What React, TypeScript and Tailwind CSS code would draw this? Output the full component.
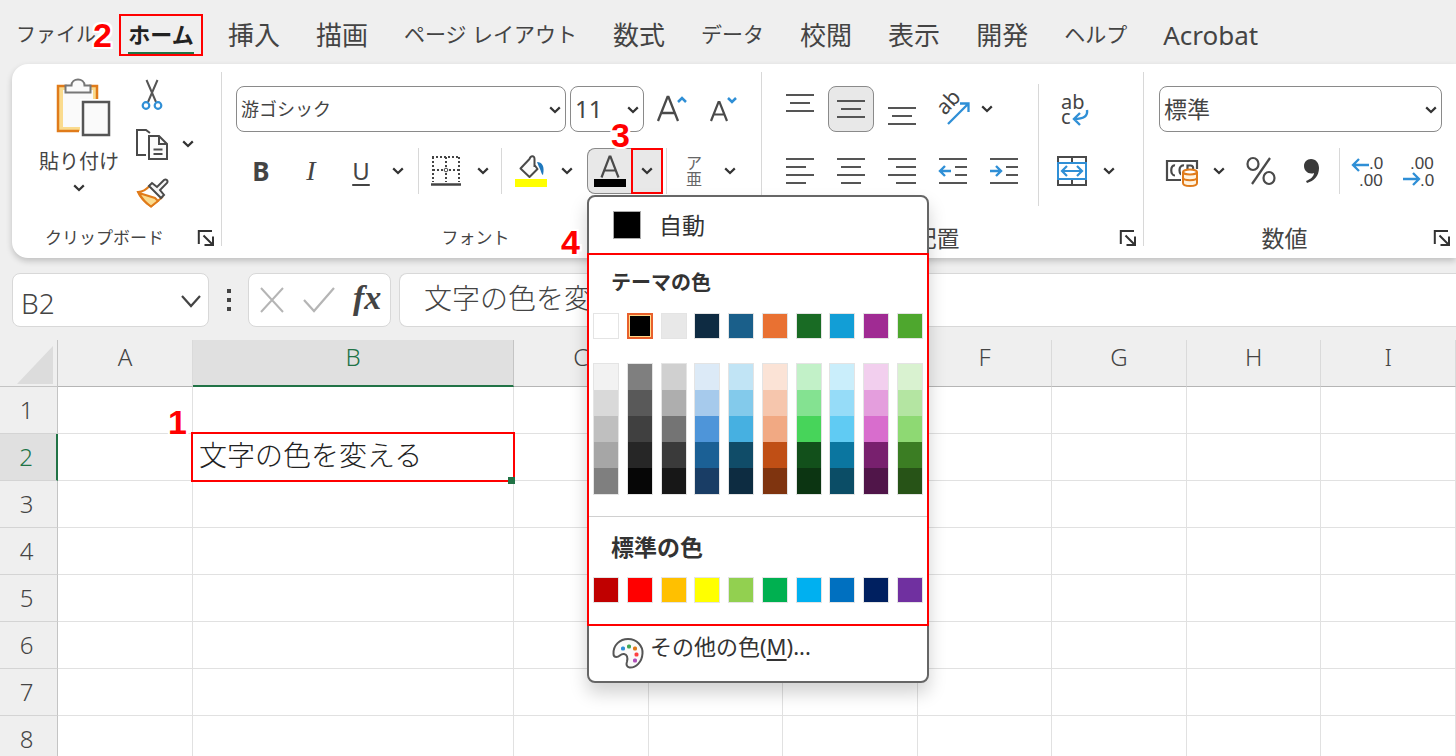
import type { ReactNode } from "react";

const tabs = ["挿入", "描画", "ページ レイアウト", "数式", "データ", "校閲", "表示", "開発", "ヘルプ", "Acrobat"];
const kanaTabs = ["ページ レイアウト", "データ", "ヘルプ"];

const themeColors = [
  { base: "#ffffff", shades: ["#f2f2f2", "#d9d9d9", "#bfbfbf", "#a6a6a6", "#7f7f7f"] },
  { base: "#000000", shades: ["#7f7f7f", "#595959", "#404040", "#262626", "#060606"] },
  { base: "#e8e8e8", shades: ["#d0d0d0", "#aeaeae", "#747474", "#3a3a3a", "#171717"] },
  { base: "#0e2b42", shades: ["#dceaf7", "#a6caec", "#4e95d9", "#1b6095", "#193d65"] },
  { base: "#1a5f8a", shades: ["#c1e4f5", "#83caeb", "#46b0e1", "#104c68", "#0d2c41"] },
  { base: "#e97132", shades: ["#fbe3d6", "#f6c6ad", "#f1a983", "#c04f15", "#7f340f"] },
  { base: "#196b24", shades: ["#c2f1c8", "#84e291", "#47d45a", "#12501b", "#0c3512"] },
  { base: "#129ed6", shades: ["#caeefb", "#96dcf8", "#60cbf3", "#0b76a0", "#0b4d66"] },
  { base: "#a02b93", shades: ["#f2cfee", "#e49edd", "#d86dcd", "#78206e", "#501549"] },
  { base: "#4ea72e", shades: ["#d9f2d0", "#b4e5a2", "#8ed973", "#3b7d23", "#275317"] },
];

const standardColors = [
  "#c00000", "#ff0000", "#ffc000", "#ffff00", "#92d050",
  "#00b050", "#00b0f0", "#0070c0", "#002060", "#7030a0",
];

const columns = ["A", "B", "C", "D", "E", "F", "G", "H", "I"];
const rows = [1, 2, 3, 4, 5, 6, 7, 8];

const Chevron = () => (
  <svg width="12" height="8" viewBox="0 0 12 8" fill="none" stroke="#333" strokeWidth="2.2">
    <path d="M1.2 1.4 6 6l4.8-4.6" />
  </svg>
);

const Launcher = () => (
  <button type="button" aria-label="オプション" className="h-[18px] w-[18px]">
    <svg width="18" height="18" viewBox="0 0 18 18" fill="none" stroke="#333" strokeWidth="2">
      <path d="M1.8 15V2H15" />
      <path d="m6.5 6.5 8.5 8.5M16 7.5V16H7.5" />
    </svg>
  </button>
);

const Callout = ({ n, className }: { n: number; className: string }) => (
  <span
    className={`absolute z-40 font-['Liberation_Sans',sans-serif] text-[34px] leading-[34px] font-bold text-[#ff0000] pointer-events-none [text-shadow:2px_0_#fff,-2px_0_#fff,0_2px_#fff,0_-2px_#fff,2px_2px_#fff,-2px_-2px_#fff,2px_-2px_#fff,-2px_2px_#fff] ${className}`}
  >
    {n}
  </span>
);

const IconButton = ({ label, className, children }: { label: string; className: string; children: ReactNode }) => (
  <button type="button" aria-label={label} className={`flex h-[46px] shrink-0 items-center justify-center ${className}`}>
    {children}
  </button>
);

const Combo = ({ label, value, className }: { label: string; value: string; className: string }) => (
  <div className={`relative h-[46px] ${className}`}>
    <select
      aria-label={label}
      className="h-full w-full appearance-none rounded-lg border border-[#8a8a8a] bg-white pl-1 text-[#444]"
    >
      <option>{value}</option>
    </select>
    <span className="pointer-events-none absolute right-[5px] top-[20px]">
      <Chevron />
    </span>
  </div>
);

// Horizontal bars, each given as [x1, x2, y]
const Lines = ({ bars, children }: { bars: number[][]; children?: ReactNode }) => (
  <svg width="30" height="32" viewBox="0 0 30 32" fill="none" stroke="#555" strokeWidth="2">
    {bars.map(([a, b, y]) => (
      <path key={y} d={`M${a} ${y}H${b}`} />
    ))}
    {children}
  </svg>
);

const GroupLabel = ({ text, className, launcher = true }: { text: string; className: string; launcher?: boolean }) => (
  <div className="mt-auto flex h-10 items-center">
    <span className={`flex-1 text-center text-[#444] ${className}`}>{text}</span>
    {launcher && <Launcher />}
  </div>
);

const GroupDivider = () => <span className="mt-2 mb-3 w-px shrink-0 bg-[#d8d8d8]" />;

const Clipboard = () => (
  <section className="flex w-[209px] shrink-0 flex-col pr-1.5">
    <div className="flex pt-2">
      <button type="button" className="ml-[22px] mt-0.5 flex w-[90px] flex-col items-center text-xl leading-7 text-[#444]">
        <svg className="ml-2" width="56" height="64" viewBox="0 0 56 64" fill="none">
          <path d="M3 12h40v45H3z" fill="#fadb8e" />
          <path d="M8 16h30v37H8z" fill="#fafafa" />
          <path d="M24 57H3V12h9M34 12h8v15" stroke="#e07b1a" strokeWidth="2.5" />
          <path d="M10.5 18.5v-7h6c0-8 13-8 13 0h6v7z" fill="#fafafa" stroke="#777" strokeWidth="2" />
          <path d="M25 25h32v38H25z" fill="#fff" />
          <path d="M28 28h26v33H28z" fill="#fafafa" stroke="#555" strokeWidth="2.5" />
        </svg>
        <span className="mt-2.5 whitespace-nowrap">貼り付け</span>
        <span className="mt-2 block leading-3"><Chevron /></span>
      </button>
      <div className="ml-2.5 flex flex-col gap-[3px]">
        <IconButton label="切り取り" className="w-9">
          <svg width="24" height="34" viewBox="0 0 24 34" fill="none">
            <path d="M6.5 2 16 24M17.5 2 8 24" stroke="#555" strokeWidth="2" />
            <circle cx="6" cy="27.5" r="3.3" stroke="#2f8fd6" strokeWidth="2.2" />
            <circle cx="18" cy="27.5" r="3.3" stroke="#2f8fd6" strokeWidth="2.2" />
          </svg>
        </IconButton>
        <div className="flex">
          <IconButton label="コピー" className="w-9">
            <svg width="34" height="34" viewBox="0 0 34 34" fill="none" stroke="#4a4a4a" strokeWidth="2">
              <path d="M11 28H2V3h9l4 3" />
              <path d="M14 9h10l8 8v15H14z" fill="#fafafa" />
              <path d="M24 9v8h8M18.5 22.5h9M18.5 27h9" />
            </svg>
          </IconButton>
          <IconButton label="コピーのオプション" className="w-9"><Chevron /></IconButton>
        </div>
        <IconButton label="書式のコピー" className="w-9">
          <svg width="34" height="32" viewBox="0 0 34 32" fill="none" strokeWidth="2">
            <path d="M15 8.500 27 20.500l-11 9C11 26 5.500 21 3 15c4 0 8-2 12-6.500z" fill="#fff" stroke="#e07b1a" />
            <path d="m4 16 16 5 3 3-7 5.500C11 26 7 22 4 16z" fill="#fadb8e" stroke="#e07b1a" />
            <path d="m14 9 3-3 5 4 7-7c2-1.500 4.500.500 3 3l-7 7 4 5-3 3z" fill="#f6f6f6" stroke="#4a4a4a" />
          </svg>
        </IconButton>
      </div>
    </div>
    <GroupLabel text="クリップボード" className="text-[17px]" />
  </section>
);

const Swatch = ({ color, selected = false }: { color: string; selected?: boolean }) => (
  <button
    type="button"
    aria-label={color}
    className={`size-[26px] ${selected ? "border-2 border-[#e8602c] ring-1 ring-inset ring-[#ffd98a]" : "border border-[#e4e4e4]"}`}
    style={{ backgroundColor: color }}
  />
);

const ColorMenu = () => (
  <div className="absolute left-0 top-[47px] z-30 w-[342px] rounded-lg border-2 border-[#666] bg-white text-[#333] shadow-[0_10px_18px_rgba(0,0,0,0.18)]">
    <button type="button" className="flex h-14 w-full items-center pl-6">
      <span className="size-7 border border-[#aaa] bg-black" />
      <span className="ml-[18px] text-[23px]">自動</span>
    </button>
    <div className="relative -mx-0.5 border-2 border-[#ff0000]">
      <h3 className="mt-3 h-8 pl-[22px] text-xl leading-8 font-bold">テーマの色</h3>
      <div className="mt-3.5 flex justify-between px-1">
        {themeColors.map((c) => (
          <Swatch key={c.base} color={c.base} selected={c.base === "#000000"} />
        ))}
      </div>
      <div className="mt-6 flex justify-between px-1">
        {themeColors.map((c) => (
          <div key={c.base} className="flex w-[26px] flex-col border border-[#e4e4e4]">
            {c.shades.map((s) => (
              <button key={s} type="button" aria-label={s} className="h-[26px] w-full" style={{ backgroundColor: s }} />
            ))}
          </div>
        ))}
      </div>
      <h3 className="mt-[21px] border-t border-[#d0d0d0] pt-3.5 pl-[22px] text-[23px] leading-8 font-bold">標準の色</h3>
      <div className="mt-3.5 flex justify-between px-1 pb-[21px]">
        {standardColors.map((c) => (
          <Swatch key={c} color={c} />
        ))}
      </div>
      <Callout n={4} className="-left-7 -top-[30px]" />
    </div>
    <button type="button" className="flex h-[55px] w-full items-start pl-[22px] pt-1">
      <svg className="mt-1.5" width="34" height="34" viewBox="0 0 34 34" fill="none">
        <path
          d="M2.500 18C2 9 9 3 17 3c9 0 15 7 14.500 14.500C31 26 25 32 18.500 31.500c-3-.500-3.500-3-2.500-6 1-4 0-7-3-7.500-4-.500-4 3-7.500 3-2 0-3-1-3-3z"
          fill="#fafafa" stroke="#555" strokeWidth="2"
        />
        <rect x="10" y="10.500" width="4" height="4" rx="1.500" fill="#2f8fd6" />
        <rect x="16" y="8.500" width="4" height="4" rx="1.500" fill="#3fa653" />
        <rect x="22" y="10.500" width="4" height="4" rx="1.500" fill="#e07b1a" />
        <rect x="23.500" y="16.500" width="4" height="4" rx="1.500" fill="#ff4040" />
        <rect x="22" y="22.500" width="4" height="4" rx="1.500" fill="#b14fb8" />
      </svg>
      <span className="ml-[5px] text-[22px] leading-8">その他の色(<u className="underline-offset-4">M</u>)...</span>
    </button>
  </div>
);

const FontGroup = () => (
  <section className="flex w-[539px] shrink-0 flex-col pr-1.5">
    <div className="flex items-center pl-3.5 pt-[22px]">
      <Combo label="フォント" value="游ゴシック" className="w-[330px] text-lg" />
      <Combo label="フォント サイズ" value="11" className="ml-1 w-[74px] text-2xl" />
      <IconButton label="フォント サイズの拡大" className="ml-2.5 w-9">
        <svg width="34" height="34" viewBox="0 0 34 34" fill="none">
          <path d="M3 29 12.500 5h1L23 29M6.500 21h13" stroke="#4a4a4a" strokeWidth="2.300" />
          <path d="m23 10 4-4 4 4" stroke="#2f8fd6" strokeWidth="2.500" />
        </svg>
      </IconButton>
      <IconButton label="フォント サイズの縮小" className="ml-4 w-9">
        <svg width="34" height="34" viewBox="0 0 34 34" fill="none">
          <path d="M4 29 11.500 10h1L20 29M7 22.500h10" stroke="#4a4a4a" strokeWidth="2.200" />
          <path d="m21 6 4 4 4-4" stroke="#2f8fd6" strokeWidth="2.500" />
        </svg>
      </IconButton>
    </div>
    <div className="mt-4 flex items-center pl-3.5 text-[#444]">
      <IconButton label="太字" className="w-[50px] text-[26px] font-bold">B</IconButton>
      <IconButton label="斜体" className="w-[50px] font-['Liberation_Serif',serif] text-[28px] italic">I</IconButton>
      <IconButton label="下線" className="w-[50px] text-2xl underline underline-offset-4">U</IconButton>
      <IconButton label="下線のオプション" className="w-6"><Chevron /></IconButton>
      <span className="mx-2 h-[46px] w-px bg-[#d8d8d8]" />
      <IconButton label="罫線" className="w-[38px]">
        <svg width="30" height="32" viewBox="0 0 30 32" fill="none" stroke="#444" strokeWidth="2">
          <path d="M1 2h28M2 2v25M28 2v25M15 2v25M2 15h26" strokeDasharray="2 2" />
          <path d="M0 29.500h30" strokeWidth="2.500" />
          <circle cx="15" cy="15" r="1.800" fill="#fff" strokeWidth="1" />
        </svg>
      </IconButton>
      <IconButton label="罫線のオプション" className="w-9"><Chevron /></IconButton>
      <span className="h-[46px] w-px bg-[#d8d8d8]" />
      <IconButton label="塗りつぶしの色" className="w-[58px]">
        <svg width="32" height="34" viewBox="0 0 32 34" fill="none">
          <path d="M15 6 6 15l9 8 8-8-4-4" fill="#fafafa" />
          <path d="M19.500 13V5c0-4-4-3.500-5 0L5.500 14.500l9 8.500 8-8-3-4" stroke="#4a4a4a" strokeWidth="2" strokeLinejoin="round" />
          <path d="M22 8c5 0 8 4 6 13-2-1-2-5-4-8z" fill="#1f78bd" />
          <path d="M0 25h32v8H0z" fill="#ff0" />
        </svg>
      </IconButton>
      <IconButton label="塗りつぶしのオプション" className="w-3.5"><Chevron /></IconButton>
      <div className="relative ml-[13px] flex">
        <IconButton label="フォントの色" className="w-11 rounded-l-lg border border-r-0 border-[#8a8a8a] bg-[#e8e8e8]">
          <svg width="32" height="34" viewBox="0 0 32 34" fill="none">
            <path d="M7.500 23.500 15.500 2.500h1l8 21M10.500 16.500h11" stroke="#4a4a4a" strokeWidth="2.200" />
            <path d="M0 25h32v8H0z" fill="#000" />
          </svg>
        </IconButton>
        <IconButton label="フォントの色のオプション" className="w-8 border-2 border-[#ff0000] bg-[#e8e8e8]"><Chevron /></IconButton>
        <Callout n={3} className="left-6 -top-[30px]" />
        <ColorMenu />
      </div>
      <span className="ml-[3px] h-[46px] w-px bg-[#d8d8d8]" />
      <IconButton label="ふりがな" className="w-[54px] flex-col text-base leading-4 text-[#666]">
        <span>ア</span>
        <span>亜</span>
      </IconButton>
      <IconButton label="ふりがなのオプション" className="w-[18px]"><Chevron /></IconButton>
    </div>
    <GroupLabel text="フォント" className="pr-[26px] text-[17px]" launcher={false} />
  </section>
);

const AlignmentGroup = () => (
  <section className="flex w-[381px] shrink-0 flex-col pr-1.5">
    <div className="flex">
      <div className="w-[264px] shrink-0 pl-[15px] pt-[22px]">
        <div className="flex gap-[5px]">
          <IconButton label="上揃え" className="w-[46px]">
            <Lines bars={[[1, 29, 2], [5, 25, 10], [1, 29, 18]]} />
          </IconButton>
          <IconButton label="上下中央揃え" className="w-[46px] rounded-lg border border-[#8a8a8a] bg-[#e8e8e8]">
            <Lines bars={[[1, 29, 8], [5, 25, 16], [1, 29, 24]]} />
          </IconButton>
          <IconButton label="下揃え" className="w-[46px]">
            <Lines bars={[[1, 29, 15], [5, 25, 23], [1, 29, 31]]} />
          </IconButton>
          <IconButton label="方向" className="w-[46px]">
            <svg className="overflow-visible" width="36" height="36" viewBox="0 0 36 36" fill="none">
              <text x="0" y="0" transform="translate(10 25) rotate(-47)" fontSize="21" fill="#444">ab</text>
              <path d="m13 33 20-20M25 12.500h8.500V21" stroke="#2f8fd6" strokeWidth="2.300" />
            </svg>
          </IconButton>
          <IconButton label="方向のオプション" className="w-3"><Chevron /></IconButton>
        </div>
        <div className="mt-4 flex gap-[5px]">
          <IconButton label="左揃え" className="w-[46px]">
            <Lines bars={[[1, 29, 4], [1, 21, 12], [1, 29, 20], [1, 21, 28]]} />
          </IconButton>
          <IconButton label="中央揃え" className="w-[46px]">
            <Lines bars={[[1, 29, 4], [5, 25, 12], [1, 29, 20], [5, 25, 28]]} />
          </IconButton>
          <IconButton label="右揃え" className="w-[46px]">
            <Lines bars={[[1, 29, 4], [9, 29, 12], [1, 29, 20], [9, 29, 28]]} />
          </IconButton>
          <IconButton label="インデントを減らす" className="w-[46px]">
            <Lines bars={[[1, 29, 4], [17, 29, 12], [17, 29, 20], [1, 29, 28]]}>
              <path d="M13 16H2M7 11l-5 5 5 5" stroke="#2f8fd6" strokeWidth="2.400" />
            </Lines>
          </IconButton>
          <IconButton label="インデントを増やす" className="w-[46px]">
            <Lines bars={[[1, 29, 4], [17, 29, 12], [17, 29, 20], [1, 29, 28]]}>
              <path d="M1 16h11M7 11l5 5-5 5" stroke="#2f8fd6" strokeWidth="2.400" />
            </Lines>
          </IconButton>
        </div>
      </div>
      <span className="ml-3 mt-5 h-[122px] w-px bg-[#d8d8d8]" />
      <div className="pl-3 pt-[22px]">
        <IconButton label="折り返して全体を表示する" className="w-[46px]">
          <svg className="overflow-visible" width="32" height="36" viewBox="0 0 32 36" fill="none">
            <text x="3" y="18" fontSize="20" fill="#444">ab</text>
            <text x="3" y="33" fontSize="20" fill="#444">c</text>
            <path d="M29 19c1 6-3 9-13 9M22 22l-6 6 6 6" stroke="#2f8fd6" strokeWidth="2.400" />
          </svg>
        </IconButton>
        <div className="mt-4 flex">
          <IconButton label="セルを結合して中央揃え" className="w-[42px]">
            <svg width="32" height="32" viewBox="0 0 32 32" fill="none">
              <path d="M2 2h28v28H2zM16 2v6M16 24v6" stroke="#4a4a4a" strokeWidth="2" />
              <path d="M2 8h28v16H2z" fill="#fff" stroke="#2f8fd6" strokeWidth="2" />
              <path d="M6 16h20M11 11l-5 5 5 5M21 11l5 5-5 5" stroke="#2f8fd6" strokeWidth="2.200" />
            </svg>
          </IconButton>
          <IconButton label="結合のオプション" className="w-8"><Chevron /></IconButton>
        </div>
      </div>
    </div>
    <GroupLabel text="配置" className="pr-2 text-[23px]" />
  </section>
);

const NumberGroup = () => (
  <section className="flex min-w-[312px] flex-1 flex-col pr-[5px]">
    <div className="pl-[15px] pr-[9px] pt-[22px]">
      <Combo label="表示形式" value="標準" className="w-full text-[23px]" />
    </div>
    <div className="mt-4 flex items-center pl-[15px] text-[#444]">
      <IconButton label="通貨表示形式" className="w-[46px]">
        <svg width="34" height="32" viewBox="0 0 34 32" fill="none">
          <path d="M2 6h30v19H2z" stroke="#4a4a4a" strokeWidth="2.200" />
          <path d="M10 10.500c-5-1-5 10 0 10M19 10.500c-6-1-6 10 0 10M22.500 20V10.500h3c4 0 3 6 0 6" stroke="#4a4a4a" strokeWidth="2.200" />
          <path d="M16 14h18v18H16z" fill="#fff" />
          <path d="M18 17v11c0 4 14 4 14 0V17" fill="#fff3e0" stroke="#e07b1a" strokeWidth="2" />
          <ellipse cx="25" cy="17" rx="7" ry="2.500" fill="#fff" stroke="#e07b1a" strokeWidth="2" />
          <path d="M18 22.500c0 3.500 14 3.500 14 0" stroke="#e07b1a" strokeWidth="2" />
        </svg>
      </IconButton>
      <IconButton label="通貨のオプション" className="w-7"><Chevron /></IconButton>
      <IconButton label="パーセント スタイル" className="w-[56px]">
        <svg width="32" height="32" viewBox="0 0 32 32" fill="none" stroke="#4a4a4a" strokeWidth="2.200">
          <ellipse cx="8" cy="9" rx="5.500" ry="6" />
          <ellipse cx="24" cy="23" rx="5.500" ry="6" />
          <path d="M25 3 7 29" />
        </svg>
      </IconButton>
      <IconButton label="桁区切りスタイル" className="w-[46px]">
        <svg width="20" height="28" viewBox="0 0 20 28" fill="#3a3a3a">
          <path d="M9 2c5 0 8 4 8 9 0 8-5 13-12 15l-1-2c5-2 8-5 8-8C7 18 2 14 2 9c0-4 3-7 7-7z" />
        </svg>
      </IconButton>
      <span className="ml-1 h-[46px] w-px bg-[#d8d8d8]" />
      <IconButton label="小数点以下の表示桁数を増やす" className="w-[54px] font-['Liberation_Sans',sans-serif]">
        <svg className="overflow-visible" width="34" height="36" viewBox="0 0 34 36" fill="none">
          <text x="19" y="16" fontSize="17" fill="#444">.0</text>
          <text x="9" y="33" fontSize="17" fill="#444">.00</text>
          <path d="M19 12H3M9 6l-6 6 6 6" stroke="#2f8fd6" strokeWidth="2.300" />
        </svg>
      </IconButton>
      <IconButton label="小数点以下の表示桁数を減らす" className="w-[48px] font-['Liberation_Sans',sans-serif]">
        <svg className="overflow-visible" width="34" height="36" viewBox="0 0 34 36" fill="none">
          <text x="9" y="16" fontSize="17" fill="#444">.00</text>
          <text x="19" y="33" fontSize="17" fill="#444">.0</text>
          <path d="M2 26h16M12 20l6 6-6 6" stroke="#2f8fd6" strokeWidth="2.300" />
        </svg>
      </IconButton>
    </div>
    <GroupLabel text="数値" className="pr-2 text-[23px]" />
  </section>
);

const FormulaBar = () => (
  <div className="mt-[15px] flex h-[54px] pl-3 text-[#444]">
    <div className="relative w-[197px] shrink-0">
      <input
        aria-label="名前ボックス"
        defaultValue="B2"
        className="h-full w-full rounded-lg border border-[#d8d8d8] bg-white pl-2 pt-1.5 text-[28px] font-light"
      />
      <svg className="pointer-events-none absolute right-2 top-[22px]" width="20" height="13" viewBox="0 0 20 13" fill="none" stroke="#444" strokeWidth="2.200">
        <path d="m1 1 9 10 9-10" />
      </svg>
    </div>
    <div className="flex w-[39px] shrink-0 flex-col items-center justify-center gap-[5px]">
      <span className="size-1 bg-[#444]" />
      <span className="size-1 bg-[#444]" />
      <span className="size-1 bg-[#444]" />
    </div>
    <div className="flex w-[143px] shrink-0 items-center rounded-lg border border-[#d8d8d8] bg-white">
      <button type="button" aria-label="キャンセル" className="ml-[11px]">
        <svg width="24" height="28" viewBox="0 0 24 28" fill="none" stroke="#b5b5b5" strokeWidth="2">
          <path d="m1 2 22 24M23 2 1 26" />
        </svg>
      </button>
      <button type="button" aria-label="入力" className="ml-[19px]">
        <svg width="32" height="28" viewBox="0 0 32 28" fill="none" stroke="#b5b5b5" strokeWidth="2.200">
          <path d="m1 14 10 11L31 2" />
        </svg>
      </button>
      <button type="button" aria-label="関数の挿入" className="ml-[18px] pb-1 font-['Liberation_Serif',serif] text-[34px] leading-9 font-bold italic">
        fx
      </button>
    </div>
    <input
      aria-label="数式バー"
      defaultValue="文字の色を変える"
      className="ml-2 min-w-0 flex-1 rounded-l-lg border border-r-0 border-[#d8d8d8] bg-white pl-6 pb-1 text-[28px] font-light"
    />
  </div>
);

const Sheet = () => (
  <table className="mt-[13px] w-full table-fixed border-separate border-spacing-0 bg-white text-[#444]">
    <colgroup>
      <col className="w-[58px]" />
      <col className="w-[135px]" />
      <col className="w-[321px]" />
      {columns.slice(2).map((c) => (
        <col key={c} />
      ))}
    </colgroup>
    <thead>
      <tr className="h-[47px] bg-[#efefef]">
        <th className="border-b border-r border-[#c4c4c4] p-0">
          <svg className="ml-auto mr-1 mt-1" width="36" height="38" viewBox="0 0 36 38">
            <path d="M36 0v38H0z" fill="#dcdcdc" />
          </svg>
        </th>
        {columns.map((c) => (
          <th
            key={c}
            scope="col"
            className={`p-0 pb-3 text-2xl leading-8 font-light ${
              c === "B"
                ? "border-b-2 border-r border-b-[#217346] border-r-[#c4c4c4] bg-[#e0e0e0] text-[#217346]"
                : "border-b border-r border-b-[#b5b5b5] border-r-[#dadada]"
            }`}
          >
            {c}
          </th>
        ))}
      </tr>
    </thead>
    <tbody>
      {rows.map((r) => (
        <tr key={r} className="h-[47px]">
          <th
            scope="row"
            className={`border-b border-[#d4d4d4] p-0 pr-1 text-2xl leading-8 font-light ${
              r === 2 ? "border-r-2 border-r-[#217346] bg-[#e0e0e0] text-[#217346]" : "border-r border-r-[#c4c4c4] bg-[#efefef]"
            }`}
          >
            {r}
          </th>
          {columns.map((c) =>
            r === 2 && c === "B" ? (
              <td key={c} className="relative border-b border-r border-[#e1e1e1] p-0">
                <div className="absolute -left-0.5 -top-0.5 -right-0.5 -bottom-0.5 border-2 border-[#ff0000]" />
                <span className="absolute -bottom-1 -right-0.5 size-[7px] bg-[#217346]" />
                <span className="block pb-1 pl-1.5 text-[28px] leading-10 font-light whitespace-nowrap text-[#222]">文字の色を変える</span>
                <Callout n={1} className="-left-[25px] -top-[29px]" />
              </td>
            ) : (
              <td key={c} className="border-b border-r border-[#e1e1e1] p-0" />
            )
          )}
        </tr>
      ))}
    </tbody>
  </table>
);

const App = () => {
  return (
    <div className="h-screen overflow-hidden bg-[#efefef] font-['Noto_Sans','Noto_Sans_CJK_JP',sans-serif]">
      {/* Ribbon tabs */}
      <nav className="flex h-16 items-center gap-9 whitespace-nowrap pl-4 pb-1.5 pt-3 text-[#444]">
        <div className="-mr-[11px] flex items-center">
          <button type="button" className="text-xl">ファイル</button>
          <div className="relative ml-[23px] flex h-[42px] w-[84px] justify-center border-2 border-[#ff0000]">
            <button type="button" className="border-b-2 border-[#217346] text-[22px] leading-9 font-bold text-[#222]">ホーム</button>
            <Callout n={2} className="-left-[28px] top-0.5" />
          </div>
        </div>
        {tabs.map((t) => (
          <button key={t} type="button" className={kanaTabs.includes(t) ? "text-[21px]" : "text-[26px]"}>
            {t}
          </button>
        ))}
      </nav>

      {/* Ribbon */}
      <div className="relative z-10 ml-3 flex h-[194px] rounded-l-2xl bg-white shadow-[0_3px_6px_rgba(0,0,0,0.2)]">
        <Clipboard />
        <GroupDivider />
        <FontGroup />
        <GroupDivider />
        <AlignmentGroup />
        <GroupDivider />
        <NumberGroup />
      </div>

      <FormulaBar />
      <Sheet />
    </div>
  );
};

export default App;
